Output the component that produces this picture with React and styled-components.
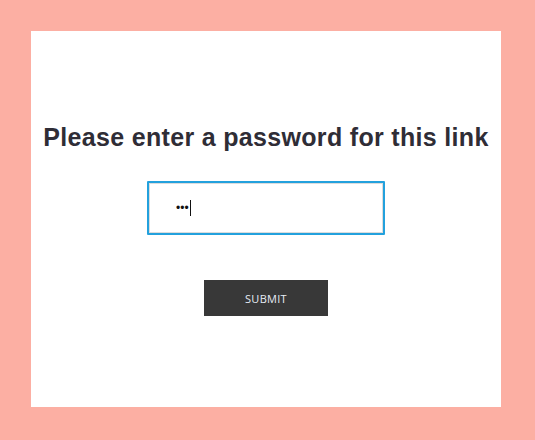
import React from "react";
import styled, { createGlobalStyle } from "styled-components";

const Global = createGlobalStyle`
  html, body {
    margin: 0;
    padding: 0;
    background: #fcafa3;
  }
  body {
    padding: 31px 34px 33px 31px;
    font-family: "Liberation Sans", Arial, sans-serif;
  }
`;

export default function App() {
  return (
    <>
      <Global />
      <Card>
        <Titulo>Please enter a password for this link</Titulo>
        <CajaCampo>
          <Campo type="password" defaultValue="abc" autoFocus />
          <Cursor />
        </CajaCampo>
        <Boton type="button">Submit</Boton>
      </Card>
    </>
  );
}

const Card = styled.div`
  width: 470px;
  height: 376px;
  background: #ffffff;
  box-sizing: border-box;
  padding-top: 89px;
  display: flex;
  flex-direction: column;
  align-items: center;
`;

const Titulo = styled.h1`
  margin: 0;
  font-family: "Liberation Sans", Arial, sans-serif;
  font-weight: bold;
  font-size: 25px;
  letter-spacing: 0.32px;
  line-height: 34px;
  color: #2f2d36;
  text-align: center;
`;

const CajaCampo = styled.div`
  position: relative;
  margin-top: 27px;
`;

const Campo = styled.input`
  display: block;
  width: 238px;
  height: 54px;
  box-sizing: border-box;
  border: 2px solid #23a1dd;
  box-shadow: inset 0 0 0 1px #dcdcdc;
  border-radius: 1px;
  padding: 0 0 0 27px;
  font-size: 12px;
  color: #111;
  outline: none;
  caret-color: transparent;
  background: #fff;
`;

const Cursor = styled.span`
  position: absolute;
  left: 43px;
  top: 19px;
  width: 1px;
  height: 16px;
  background: #111;
`;

const Boton = styled.button`
  margin-top: 45px;
  width: 124px;
  height: 36px;
  border: none;
  border-radius: 0;
  background: #383838;
  color: #e6ecf5;
  font-family: "Open Sans", "Noto Sans", sans-serif;
  font-size: 11px;
  font-weight: 500;
  letter-spacing: 0.3px;
  text-transform: uppercase;
  cursor: pointer;
`;
